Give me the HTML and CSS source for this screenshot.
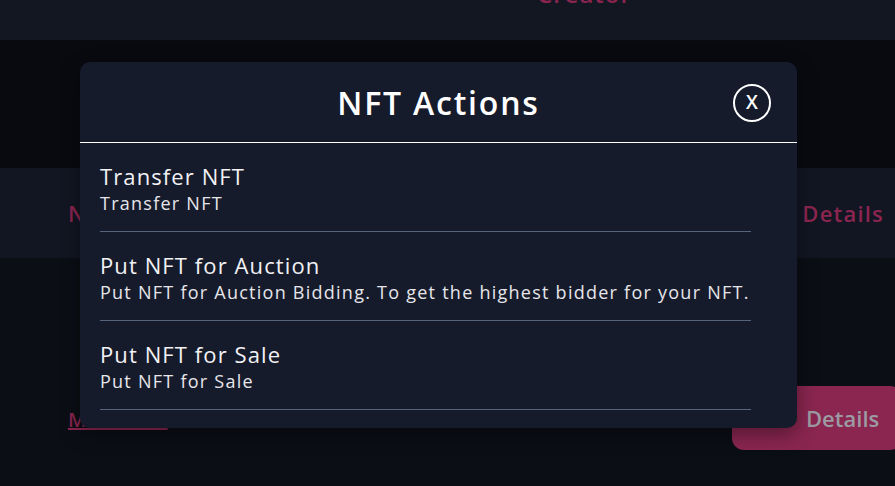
FILE: index.html
```html
<!DOCTYPE html>
<html>
<head>
<meta charset="utf-8">
<link rel="stylesheet" href="styles.css">
</head>
<body>
<div class="page">
  <header class="topbar">
    <span class="nav-link">Creator</span>
  </header>
  <section class="hero"></section>
  <section class="row-band">
    <span class="band-link">NFT Name</span>
    <span class="band-details">Details</span>
  </section>
  <section class="content">
    <span class="more-link">More Info</span>
    <span class="details-btn">Details</span>
  </section>
</div>

<div class="modal">
  <div class="modal-head">
    <h2 class="modal-title">NFT Actions</h2>
    <button class="close-btn">X</button>
  </div>
  <ul class="action-list">
    <li class="action">
      <div class="action-title">Transfer NFT</div>
      <div class="action-desc">Transfer NFT</div>
    </li>
    <li class="action">
      <div class="action-title">Put NFT for Auction</div>
      <div class="action-desc">Put NFT for Auction Bidding. To get the highest bidder for your NFT.</div>
    </li>
    <li class="action">
      <div class="action-title">Put NFT for Sale</div>
      <div class="action-desc">Put NFT for Sale</div>
    </li>
  </ul>
</div>
</body>
</html>
```
FILE: styles.css
```css
* { box-sizing: border-box; }
html, body { margin: 0; padding: 0; }
body {
  width: 895px;
  height: 486px;
  overflow: hidden;
  background: #0b0e15;
  font-family: "Open Sans", "Noto Sans", sans-serif;
  color: #fff;
  position: relative;
}
.page { display: flex; flex-direction: column; }
.topbar {
  height: 40px;
  background: #131722;
  display: flex;
  justify-content: flex-start;
  padding-left: 537px;
  overflow: hidden;
}
.nav-link {
  color: #8b2550;
  font-weight: 600;
  font-size: 24px;
  line-height: 24px;
  margin-top: -18px;
  letter-spacing: 1px;
}
.hero { height: 128px; background: #080a10; }
.row-band {
  height: 90px;
  background: #121622;
  display: flex;
  align-items: center;
  justify-content: space-between;
  padding: 0 11px 0 68px;
}
.band-link, .band-details {
  color: #8b2550;
  font-size: 22px;
  font-weight: 600;
  letter-spacing: 1.2px;
}
.content {
  display: flex;
  justify-content: space-between;
  align-items: flex-start;
  padding: 128px 0 0 68px;
}
.more-link {
  color: #8b2550;
  font-size: 20px;
  font-weight: 600;
  text-decoration: underline;
  margin-top: 20px;
  letter-spacing: 0.6px;
}
.details-btn {
  width: 170px;
  height: 64px;
  margin-right: -7px;
  background: #8a2650;
  border-radius: 12px;
  color: #9c9aa2;
  font-size: 22px;
  font-weight: 600;
  display: flex;
  align-items: center;
  padding-left: 74px;
}

.modal {
  position: absolute;
  left: 80px;
  top: 62px;
  width: 717px;
  height: 366px;
  background: #161b2b;
  border-radius: 10px;
  box-shadow: 0 6px 20px rgba(0,0,0,0.4);
}
.modal-head {
  height: 81px;
  border-bottom: 1.5px solid #ffffff;
  display: flex;
  align-items: center;
  justify-content: center;
  position: relative;
}
.modal-title {
  margin: 0;
  font-size: 32px;
  font-weight: 600;
  letter-spacing: 1.8px;
  padding-left: 0;
}
.close-btn {
  position: absolute;
  right: 26px;
  top: 22px;
  width: 38px;
  height: 38px;
  border: 2px solid #fff;
  border-radius: 50%;
  background: transparent;
  color: #fff;
  font-family: "Open Sans", sans-serif;
  font-size: 19px;
  font-weight: 600;
  line-height: 1;
  padding: 0 0 1px;
  display: flex;
  align-items: center;
  justify-content: center;
}
.action-list {
  list-style: none;
  margin: 0;
  padding: 0 46px 0 20px;
}
.action {
  height: 89px;
  border-bottom: 1.5px solid #56637f;
  padding-top: 19px;
}
.action-title {
  font-size: 22px;
  line-height: 29px;
  color: #f2f2f5;
  letter-spacing: 1.1px;
}
.action-desc {
  font-size: 18px;
  line-height: 24px;
  color: #e6e6ea;
  letter-spacing: 1.25px;
}
```
